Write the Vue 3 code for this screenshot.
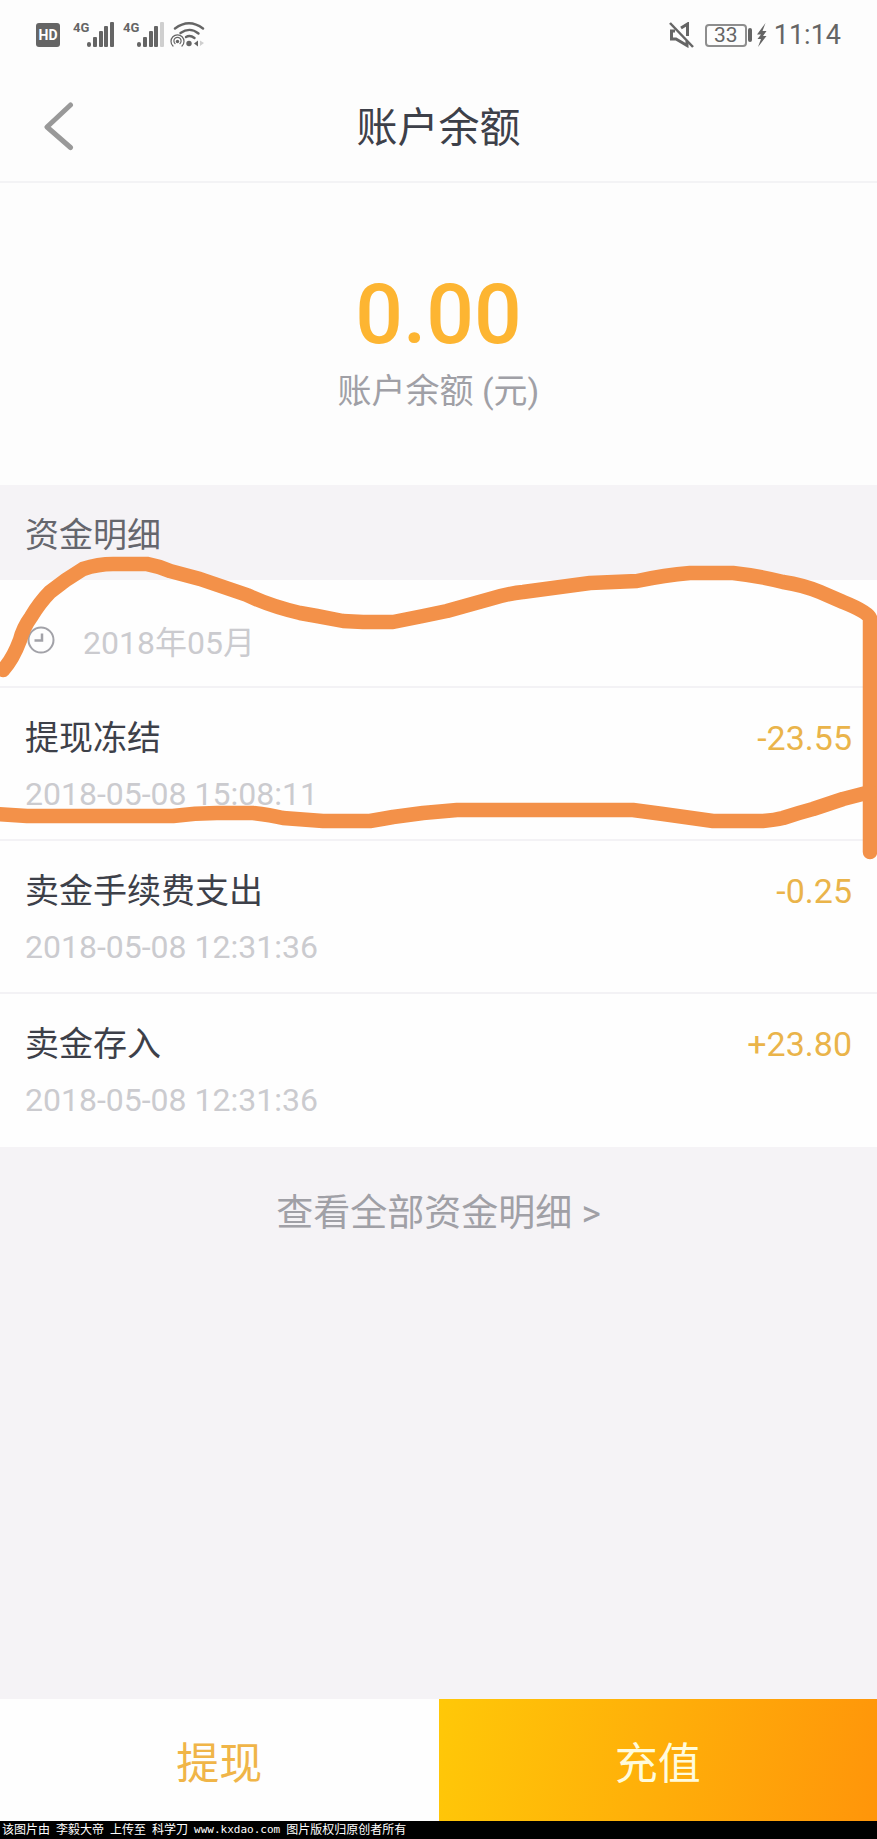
<script setup>
const signals = [
  { id: 'sim1', last: '#656565' },
  { id: 'sim2', last: '#cfcfcf' },
]

const records = [
  { id: 1, title: '提现冻结', time: '2018-05-08 15:08:11', amount: '-23.55' },
  { id: 2, title: '卖金手续费支出', time: '2018-05-08 12:31:36', amount: '-0.25' },
  { id: 3, title: '卖金存入', time: '2018-05-08 12:31:36', amount: '+23.80' },
]
</script>

<template>
  <div class="page">
    <div class="status">
      <div class="status-side">
        <svg class="hd" width="24" height="26" viewBox="0 0 24 26">
          <rect x="0" y="1" width="24" height="24" rx="3" fill="#656565" />
          <text x="12" y="18" text-anchor="middle" class="hd-text">HD</text>
        </svg>
        <svg v-for="s in signals" :key="s.id" class="signal" width="42" height="34" viewBox="0 -4 42 34">
          <text x="0" y="10" class="net-text">4G</text>
          <g fill="#656565">
            <rect x="14" y="20" width="4" height="5" rx="2" />
            <rect x="20" y="15" width="4" height="10" rx="1" />
            <rect x="26" y="9" width="4" height="16" rx="1" />
            <rect x="31" y="4" width="4" height="21" rx="1" />
            <rect x="37" y="0" width="4" height="25" rx="1" :fill="s.last" />
          </g>
        </svg>
        <svg class="wifi" width="36" height="26" viewBox="0 0 36 26" fill="none" stroke="#656565" stroke-linecap="round">
          <path d="M5 6.5Q19 -4 33 6.5" stroke-width="2.4" />
          <path d="M10.5 11Q20 4.5 28.5 11.5" stroke-width="2.4" />
          <path d="M16 15Q20 12.5 24.5 16" stroke-width="2.4" />
          <circle cx="19" cy="21.5" r="2.7" fill="#656565" stroke="none" />
          <path d="M3 24A6.5 6.5 0 1 1 12 24" stroke-width="1.2" />
          <path d="M5 21.5A3.6 3.6 0 1 1 10 21.5" stroke-width="1.2" />
          <circle cx="7.5" cy="19.5" r="1.7" fill="#656565" stroke="none" />
          <path d="M28 18.5v6l-4-3z" fill="#656565" stroke="none" />
          <path d="M30 18.5v5.5l4-3z" fill="#cfcfcf" stroke="none" />
        </svg>
      </div>
      <div class="status-side">
        <svg class="mute" width="25" height="26" viewBox="0 0 25 26" fill="none" stroke="#656565" stroke-width="2.5">
          <path d="M1 1L24 25" />
          <path d="M6 9H2.5V17H7L18 23.5V19" stroke-width="3" />
          <path d="M12 6L18.5 2V14" stroke-width="3" />
        </svg>
        <span class="battery">33</span>
        <span class="battery-tip"></span>
        <svg class="bolt" width="12" height="26" viewBox="0 0 12 26">
          <path d="M9.5 1L1 12.5H5L1.5 17H5L2 25L10.5 14H7L10.5 9H6.5Z" fill="#656565" />
        </svg>
        <span class="clock">11:14</span>
      </div>
    </div>

    <header class="header">
      <button class="back" type="button" aria-label="返回">
        <svg width="32" height="50" viewBox="0 0 32 50" fill="none" stroke="#999" stroke-width="5" stroke-linecap="round" stroke-linejoin="round">
          <path d="M27.5 4L4 26L27.5 46.5" />
        </svg>
      </button>
      <h1>账户余额</h1>
    </header>

    <section class="balance">
      <strong>0.00</strong>
      <p>账户余额 (元)</p>
    </section>

    <section class="details">
      <h2>资金明细</h2>
      <div class="month">
        <svg width="28" height="28" viewBox="0 0 28 28" fill="none" stroke="#a2a2a8">
          <circle cx="14" cy="14" r="12.5" stroke-width="2" />
          <path d="M15 7.5V14.5H7.5" stroke-width="2.5" />
        </svg>
        <span>2018年05月</span>
      </div>
      <ul class="records">
        <li v-for="r in records" :key="r.id">
          <div class="record-main">
            <span>{{ r.title }}</span>
            <span class="amount">{{ r.amount }}</span>
          </div>
          <time>{{ r.time }}</time>
        </li>
      </ul>
      <svg class="marker" viewBox="0 0 877 400" preserveAspectRatio="none" aria-hidden="true">
        <path d="M3 185Q13 174 20 155Q23 143 31 132Q40 117 50 107Q66 94 83 84Q98 79 113 79H147Q158 81 170 86L200 94L247 110Q270 121 300 128L317 131L343 136L363 137H393L423 131L447 126L490 114Q510 108 523 107L590 98L637 96Q665 90 690 88H733Q760 91 783 97Q803 100 820 107L843 117Q868 127 870 133V367" />
        <path d="M-5 329L27 331H173Q195 328 217 328H253Q270 330 283 333L323 336H370Q382 334 393 332L423 328L457 325H633L663 329L713 336H763Q775 335 783 333Q798 328 813 324L843 314L870 307" />
      </svg>
    </section>

    <a class="all" href="#">查看全部资金明细 &gt;</a>

    <div class="actions">
      <button class="withdraw" type="button">提现</button>
      <button class="recharge" type="button">充值</button>
    </div>

    <footer class="credit">
      <span>该图片由</span>
      <span>李毅大帝</span>
      <span>上传至</span>
      <span>科学刀</span>
      <span class="site">www.kxdao.com</span>
      <span>图片版权归原创者所有</span>
    </footer>
  </div>
</template>

<style>
body {
  margin: 0;
}
</style>

<style scoped>
.page {
  display: flex;
  flex-direction: column;
  min-height: 100vh;
  background: #f5f3f6;
  color: #3d4049;
  font-family: Roboto, "Noto Sans CJK SC", sans-serif;
  font-weight: 400;
}

h1,
h2,
p,
ul {
  margin: 0;
  padding: 0;
  font-weight: inherit;
}

button {
  padding: 0;
  border: 0;
  background: none;
  font: inherit;
  cursor: pointer;
}

svg {
  display: block;
}

.status {
  display: flex;
  justify-content: space-between;
  height: 70px;
  padding: 0 36px;
  background: #fdfdfd;
  color: #656565;
}

.status-side {
  display: flex;
  align-items: center;
}

.hd {
  margin-right: 13px;
}

.hd-text {
  fill: #fff;
  font: 700 14px Roboto, sans-serif;
}

.net-text {
  fill: #656565;
  font: 700 13px Roboto, sans-serif;
}

.signal {
  margin-right: 8px;
}

.wifi {
  margin-left: -3px;
}

.mute {
  margin-right: 11px;
}

.battery {
  box-sizing: border-box;
  width: 42px;
  height: 23px;
  border: 2px solid #8e8e8e;
  border-radius: 4px;
  font-size: 21px;
  line-height: 19px;
  text-align: center;
}

.battery-tip {
  width: 4px;
  height: 14px;
  margin: 0 4px 0 1px;
  border-radius: 2px;
  background: #656565;
}

.bolt {
  margin-right: 6px;
}

.clock {
  font-size: 27px;
}

.header {
  display: grid;
  grid-template-columns: 100px 1fr 100px;
  align-items: center;
  height: 111px;
  border-bottom: 2px solid #f3f3f5;
  background: #fdfdfd;
}

.back {
  justify-self: start;
  margin-left: 43px;
}

h1 {
  padding-top: 4px;
  font-size: 41px;
  line-height: 60px;
  text-align: center;
}

.balance {
  padding: 100px 24px 70px;
  background: #fdfdfd;
  text-align: center;
}

.balance strong {
  display: block;
  color: #fdb532;
  font-size: 84px;
  font-weight: 500;
  line-height: 64px;
}

.balance p {
  margin-top: 20px;
  color: #a0a0a6;
  font-size: 34px;
  line-height: 48px;
}

.details {
  position: relative;
}

h2 {
  padding: 5px 25px 0;
  color: #65666d;
  font-size: 34px;
  line-height: 90px;
}

.month {
  display: flex;
  align-items: center;
  gap: 28px;
  box-sizing: border-box;
  height: 108px;
  padding: 14px 27px 0;
  border-bottom: 2px solid #f3f2f5;
  background: #fefefe;
  color: #cbcbcf;
  font-size: 32px;
}

.records {
  list-style: none;
}

.records li {
  padding: 26px 25px 27px;
  border-bottom: 2px solid #f3f2f5;
  background: #fefefe;
}

.records li:last-child {
  border-color: #fefefe;
}

.record-main {
  display: flex;
  justify-content: space-between;
  font-size: 34px;
  line-height: 48px;
}

.amount {
  color: #eab44a;
}

time {
  display: block;
  margin-top: 14px;
  color: #cbcbcf;
  font-size: 32px;
  line-height: 36px;
}

.marker {
  position: absolute;
  top: 0;
  left: 0;
  width: 100%;
  height: 400px;
  fill: none;
  stroke: #f39149;
  stroke-width: 14.5;
  stroke-linecap: round;
  stroke-linejoin: round;
  pointer-events: none;
}

.all {
  align-self: center;
  margin: 40px 0;
  color: #a0a0a6;
  font-size: 37px;
  line-height: 54px;
  text-decoration: none;
}

.actions {
  display: grid;
  grid-template-columns: 1fr 1fr;
  height: 122px;
  margin-top: auto;
  font-size: 43px;
}

.withdraw {
  background: #fefefe;
  color: #f0b548;
}

.recharge {
  background: linear-gradient(100deg, #ffc808, #ff950a);
  color: #fffbdc;
}

.credit {
  display: flex;
  align-items: center;
  gap: 6px;
  height: 18px;
  padding: 0 2px;
  background: #000;
  color: #fff;
  font-size: 12px;
  line-height: 18px;
  white-space: nowrap;
}

.site {
  font-family: "DejaVu Sans Mono", monospace;
  font-size: 11px;
}
</style>
